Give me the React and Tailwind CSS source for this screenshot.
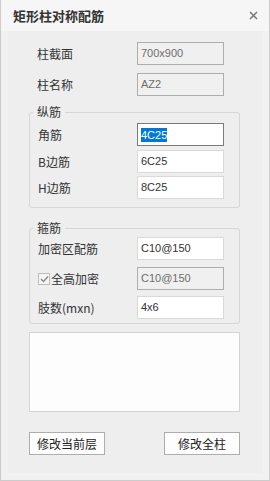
import React from "react";

const cjk = { fontFamily: '"Noto Sans CJK SC", "Microsoft YaHei", sans-serif' };
const latin = { fontFamily: '"Liberation Sans", "Noto Sans CJK SC", sans-serif' };

function Input({ value, disabled, focused, className = "" }) {
  let box = "border-[#d9d9d9] bg-white text-[#333333]";
  if (disabled) box = "border-[#adadad] bg-[#f0f0f0] text-[#6d6d6d]";
  if (focused) box = "border-[#7a7a7a] bg-white text-[#333333]";
  return (
    <div
      className={`w-[87px] h-[23px] border flex items-center pl-[3px] text-[11px] leading-none ${box} ${className}`}
      style={latin}
    >
      {focused ? (
        <span className="bg-[#0078d7] text-white px-0 leading-[14px]">{value}</span>
      ) : (
        <span>{value}</span>
      )}
    </div>
  );
}

function Row({ label, children, className = "", labelW = "w-[108px]" }) {
  return (
    <div className={`flex items-center ${className}`}>
      <div className={`${labelW} pl-[8px] text-[12px] text-[#333333] leading-none`} style={cjk}>
        {label}
      </div>
      {children}
    </div>
  );
}

function Group({ title, children, className = "" }) {
  return (
    <div className={`relative border border-[#d6d6d6] rounded-[3px] ${className}`}>
      <span
        className="absolute left-[3px] top-[-9px] px-[4px] bg-[#eeeeee] text-[12px] leading-[16px] text-[#333333]"
        style={cjk}
      >
        {title}
      </span>
      {children}
    </div>
  );
}

export default function App() {
  return (
    <div className="w-[270px] h-[481px] flex flex-col bg-[#f1f1f1] border-l border-r border-b border-[#cccccc]">
      <div className="h-[31px] shrink-0 flex items-center justify-between pl-[12px] pr-[10px] bg-[#f6f6f6]">
        <span className="text-[13px] font-bold text-[#333333] leading-none" style={cjk}>
          矩形柱对称配筋
        </span>
        <svg width="9" height="9" viewBox="0 0 9 9" className="mr-[1px]">
          <path d="M1 1 L8 8 M8 1 L1 8" stroke="#777777" strokeWidth="1.5" fill="none" />
        </svg>
      </div>
      <div className="flex-1 mx-[7px] mb-[7px] bg-[#eeeeee] pl-[21px] pt-[11px]">
        <div className="w-[211px] flex flex-col">
          <Row label="柱截面">
            <Input value="700x900" disabled />
          </Row>
          <Row label="柱名称" className="mt-[8px]">
            <Input value="AZ2" disabled />
          </Row>

          <Group title="纵筋" className="mt-[16px] pt-[10px] pb-[8px]">
            <Row label="角筋" labelW="w-[107px]">
              <Input value="4C25" focused />
            </Row>
            <Row label="B边筋" labelW="w-[107px]" className="mt-[4px]">
              <Input value="6C25" />
            </Row>
            <Row label="H边筋" labelW="w-[107px]" className="mt-[3px]">
              <Input value="8C25" />
            </Row>
          </Group>

          <Group title="箍筋" className="mt-[20px] pt-[8px] pb-[4px]">
            <Row label="加密区配筋" labelW="w-[107px]">
              <Input value="C10@150" />
            </Row>
            <div className="flex items-center mt-[7px]">
              <div className="w-[107px] pl-[8px] flex items-center">
                <div className="w-[12px] h-[12px] border border-[#bcbcbc] bg-[#f4f4f4] flex items-center justify-center">
                  <svg width="9" height="8" viewBox="0 0 9 8">
                    <path d="M1 4 L3.5 6.5 L8 1.5" stroke="#8a8a8a" strokeWidth="1.4" fill="none" />
                  </svg>
                </div>
                <span className="ml-[1px] text-[12px] text-[#333333] leading-none" style={cjk}>
                  全高加密
                </span>
              </div>
              <Input value="C10@150" disabled />
            </div>
            <Row label="肢数(mxn)" labelW="w-[107px]" className="mt-[6px]">
              <Input value="4x6" />
            </Row>
          </Group>

          <div className="mt-[8px] h-[80px] border border-[#d4d4d4] bg-[#fdfdfd]" />

          <div className="mt-[20px] flex justify-between">
            <button
              className="w-[76px] h-[23px] border border-[#adadad] bg-[#fdfdfd] text-[12px] text-[#222222] leading-none flex items-center justify-center"
              style={cjk}
            >
              修改当前层
            </button>
            <button
              className="w-[76px] h-[23px] border border-[#adadad] bg-[#fdfdfd] text-[12px] text-[#222222] leading-none flex items-center justify-center"
              style={cjk}
            >
              修改全柱
            </button>
          </div>
        </div>
      </div>
    </div>
  );
}
